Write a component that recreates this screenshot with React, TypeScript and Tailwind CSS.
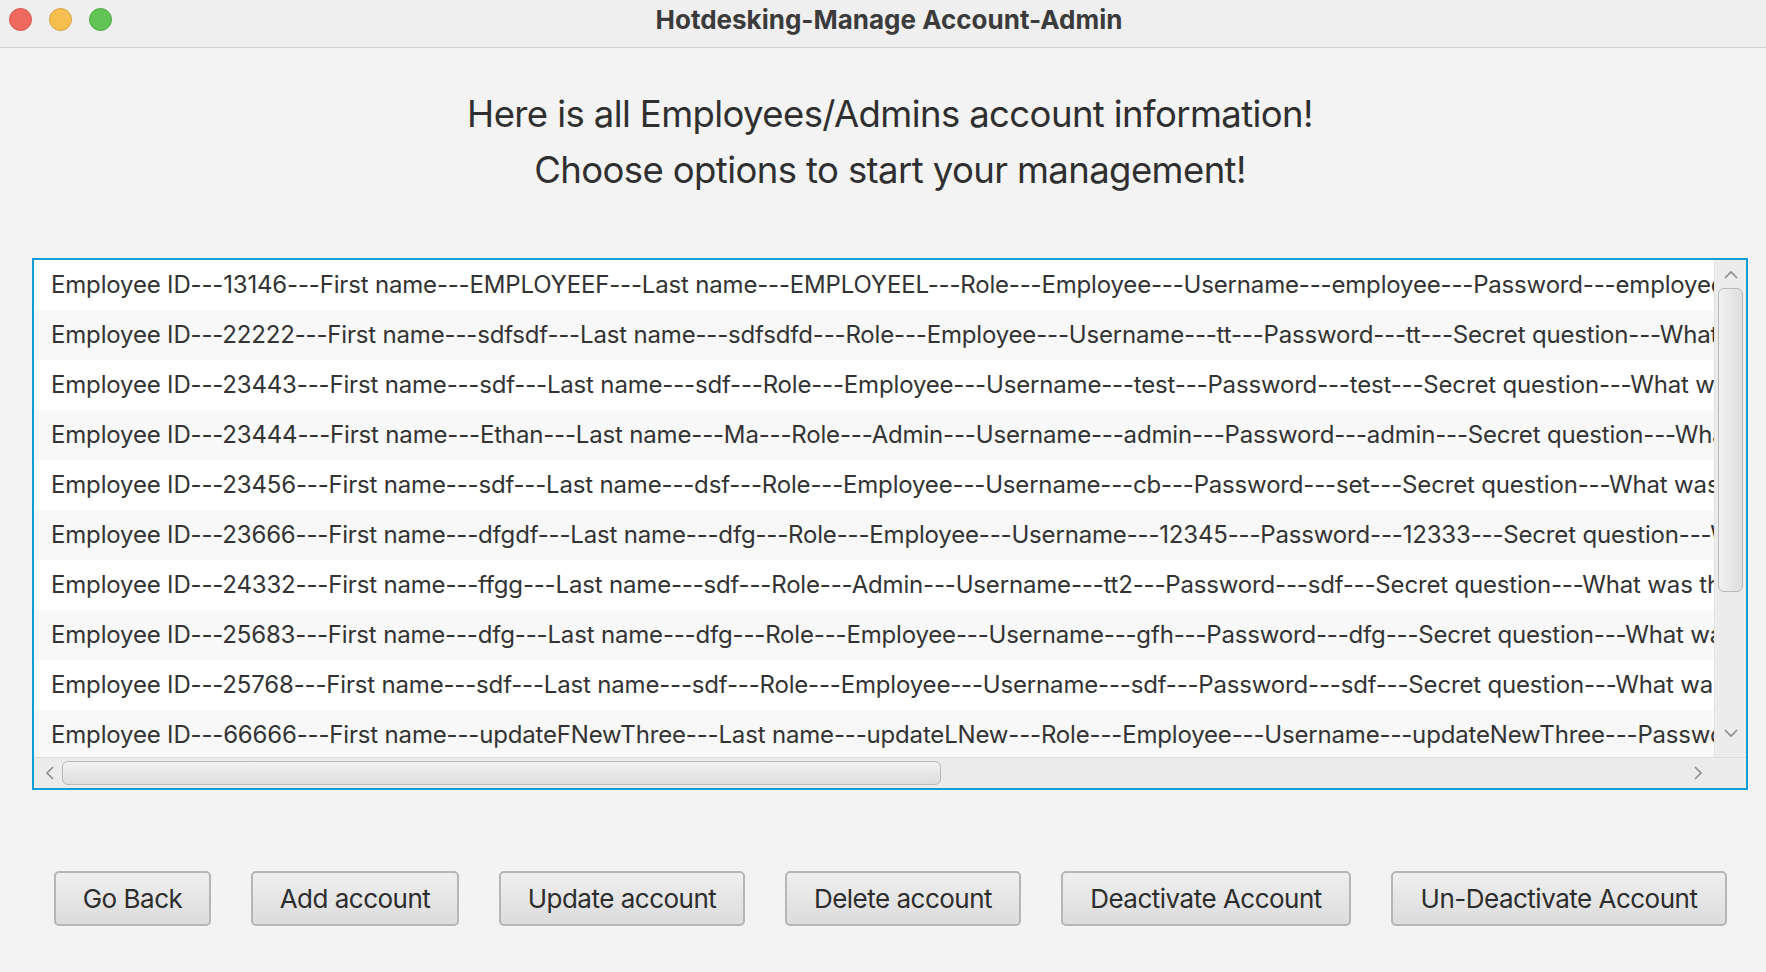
import React from "react";

const rows = [
  "Employee ID---13146---First name---EMPLOYEEF---Last name---EMPLOYEEL---Role---Employee---Username---employee---Password---employee---Secret question---What was the name of your first pet?",
  "Employee ID---22222---First name---sdfsdf---Last name---sdfsdfd---Role---Employee---Username---tt---Password---tt---Secret question---What was the name of your first pet?",
  "Employee ID---23443---First name---sdf---Last name---sdf---Role---Employee---Username---test---Password---test---Secret question---What was the name of your first pet?",
  "Employee ID---23444---First name---Ethan---Last name---Ma---Role---Admin---Username---admin---Password---admin---Secret question---What was the name of your first pet?",
  "Employee ID---23456---First name---sdf---Last name---dsf---Role---Employee---Username---cb---Password---set---Secret question---What was the name of your first pet?",
  "Employee ID---23666---First name---dfgdf---Last name---dfg---Role---Employee---Username---12345---Password---12333---Secret question---What was the name of your first pet?",
  "Employee ID---24332---First name---ffgg---Last name---sdf---Role---Admin---Username---tt2---Password---sdf---Secret question---What was the name of your first pet?",
  "Employee ID---25683---First name---dfg---Last name---dfg---Role---Employee---Username---gfh---Password---dfg---Secret question---What was the name of your first pet?",
  "Employee ID---25768---First name---sdf---Last name---sdf---Role---Employee---Username---sdf---Password---sdf---Secret question---What was the name of your first pet?",
  "Employee ID---66666---First name---updateFNewThree---Last name---updateLNew---Role---Employee---Username---updateNewThree---Password---updateNewThree",
];

const buttons = [
  { label: "Go Back", w: "w-[157px]" },
  { label: "Add account", w: "w-[208px]" },
  { label: "Update account", w: "w-[246px]" },
  { label: "Delete account", w: "w-[236px]" },
  { label: "Deactivate Account", w: "w-[290px]" },
  { label: "Un-Deactivate Account", w: "w-[336px]" },
];

function Chevron({ dir }: { dir: "up" | "down" | "left" | "right" }) {
  const pts: Record<string, string> = {
    up: "2,9 8,3 14,9",
    down: "2,3 8,9 14,3",
    left: "9,2 3,8 9,14",
    right: "3,2 9,8 3,14",
  };
  const vb = dir === "up" || dir === "down" ? "0 0 16 12" : "0 0 12 16";
  const cls = dir === "up" || dir === "down" ? "w-[16px] h-[12px]" : "w-[12px] h-[16px]";
  return (
    <svg viewBox={vb} className={cls}>
      <polyline points={pts[dir]} fill="none" stroke="#8c8c8c" strokeWidth="1.6" />
    </svg>
  );
}

export default function App() {
  return (
    <div
      className="w-[1766px] h-[972px] bg-[#f3f3f3] flex flex-col overflow-hidden"
      style={{ fontFamily: "Inter, 'Liberation Sans', sans-serif" }}
    >
      {/* title bar */}
      <div className="h-[48px] shrink-0 bg-[#efefef] border-b border-[#d0d0d0] flex items-center pb-[8px] relative">
        <div className="flex items-center gap-[17px] pl-[9px]">
          <div className="w-[23px] h-[23px] rounded-full bg-[#ee6a5f] border border-[#d9534a]" />
          <div className="w-[23px] h-[23px] rounded-full bg-[#f5bf4f] border border-[#d9a23c]" />
          <div className="w-[23px] h-[23px] rounded-full bg-[#61c454] border border-[#4fa843]" />
        </div>
        <div className="absolute left-0 right-0 top-0 h-[39px] flex items-center justify-center pl-[12px] text-[26px] font-bold text-[#3b3b3b]">
          Hotdesking-Manage Account-Admin
        </div>
      </div>

      {/* heading */}
      <div className="pt-[38px] flex flex-col items-center text-[36.5px] leading-[56px] text-[#2f2f2f] tracking-[-0.6px] pl-[14px]">
        <div>Here is all Employees/Admins account information!</div>
        <div>Choose options to start your management!</div>
      </div>

      {/* list */}
      <div className="mt-[60px] ml-[32px] w-[1716px] h-[532px] border-2 border-[#0f9dd6] bg-white flex flex-col">
        <div className="flex h-[497px]">
          <div className="flex-1 overflow-hidden flex flex-col">
            {rows.map((r, i) => (
              <div
                key={i}
                className={`h-[50px] shrink-0 flex items-center pl-[17px] whitespace-nowrap text-[24px] text-[#333333] tracking-[-0.17px] ${
                  i % 2 === 1 ? "bg-[#f8f8f8]" : "bg-white"
                }`}
              >
                {r}
              </div>
            ))}
          </div>
          <div className="w-[32px] shrink-0 bg-[#ececec] border-l border-[#e2e2e2] flex flex-col items-center">
            <div className="h-[28px] flex items-center justify-center pt-[2px]">
              <Chevron dir="up" />
            </div>
            <div className="w-[25px] h-[304px] rounded-[6px] border border-[#b9b9b9] bg-gradient-to-r from-[#f2f2f2] to-[#dddddd]" />
            <div className="flex-1" />
            <div className="h-[36px] flex items-start justify-center pt-[6px]">
              <Chevron dir="down" />
            </div>
          </div>
        </div>
        <div className="flex-1 flex bg-[#ebebeb] border-t border-[#dcdcdc]">
          <div className="flex-1 flex items-center">
            <div className="w-[28px] flex justify-center pl-[4px]">
              <Chevron dir="left" />
            </div>
            <div className="w-[879px] h-[24px] rounded-[6px] border border-[#b9b9b9] bg-gradient-to-b from-[#f2f2f2] to-[#dddddd]" />
            <div className="flex-1" />
            <div className="w-[24px] flex justify-center mr-[4px]">
              <Chevron dir="right" />
            </div>
          </div>
          <div className="w-[32px] bg-[#ececec]" />
        </div>
      </div>

      {/* buttons */}
      <div className="mt-[81px] pl-[54px] flex gap-[40px]">
        {buttons.map((b) => (
          <div
            key={b.label}
            className={`${b.w} h-[55px] rounded-[5px] border-2 border-[#b6b6b6] bg-gradient-to-b from-[#efefef] to-[#dcdcdc] flex items-center justify-center text-[26px] text-[#2d2d2d] tracking-[-0.5px]`}
          >
            {b.label}
          </div>
        ))}
      </div>
    </div>
  );
}
